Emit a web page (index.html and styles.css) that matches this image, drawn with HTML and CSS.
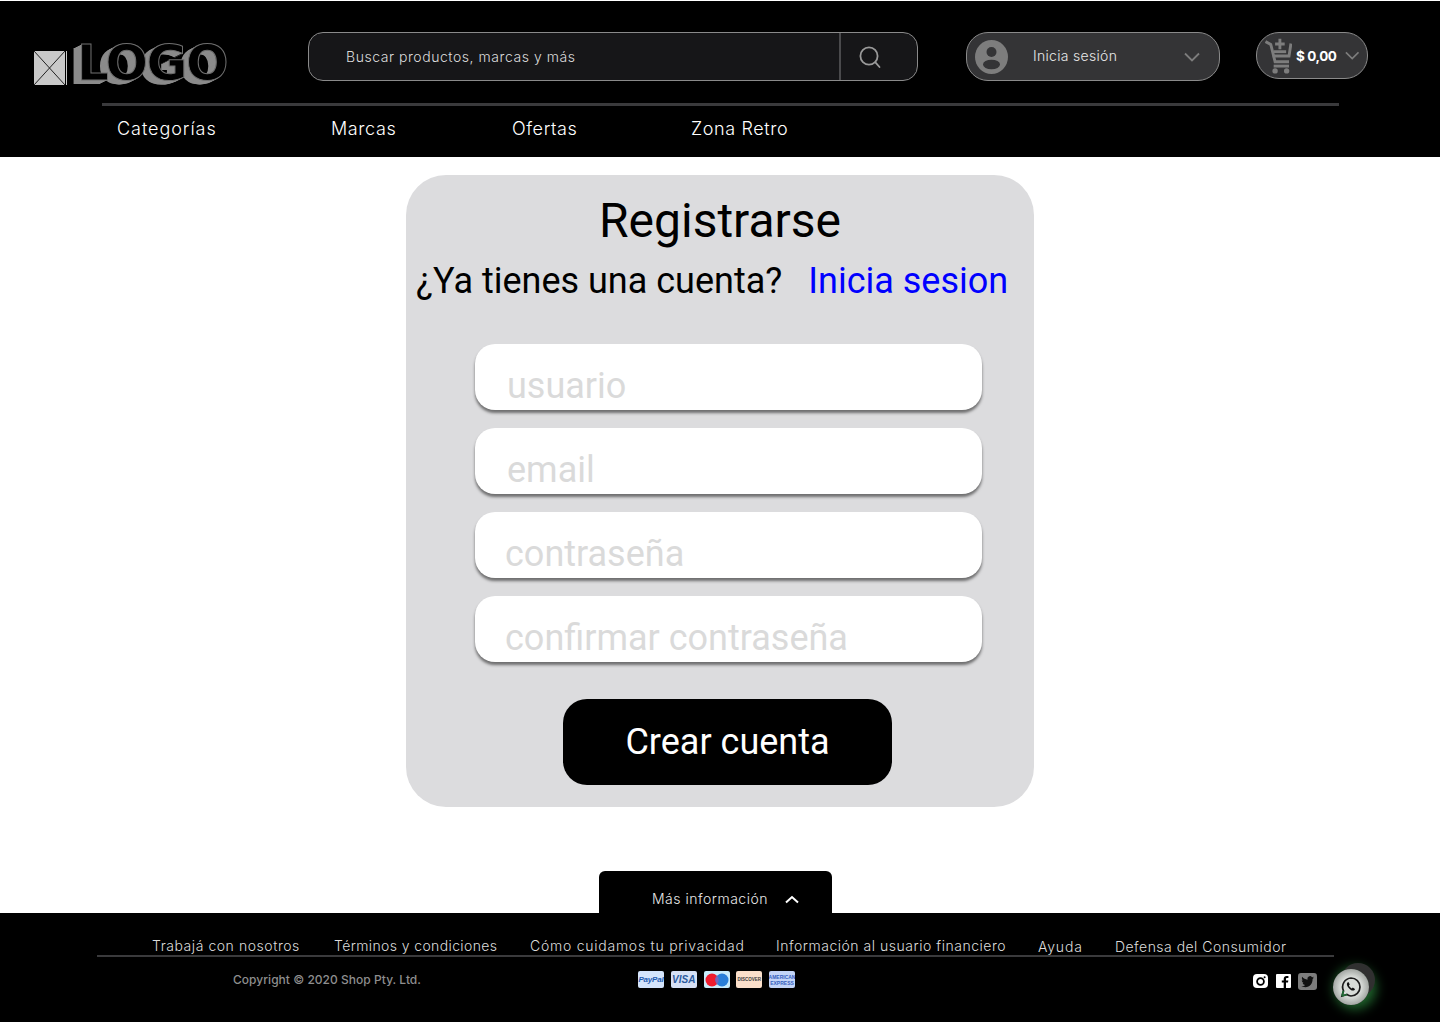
FILE: index.html
```html
<!DOCTYPE html>
<html lang="es">
<head>
  <meta charset="UTF-8" />
  <meta name="viewport" content="width=device-width, initial-scale=1.0"/>
  <title>Registrarse</title>
  <link rel="stylesheet" href="styles.css">
</head>
<body>
  <!-- Header -->
  <header class="header">
    <div class="top-row">
      <div class="logo">
        <svg class="logo-box" width="33" height="34" viewBox="0 0 33 34">
          <rect x="0" y="0" width="33" height="34" fill="#c9c9c9"/>
          <path d="M0 0L31 34M31 0L0 34" stroke="#222" stroke-width="1"/>
          <rect x="31" y="0" width="1" height="34" fill="#000"/>
        </svg>
        <span class="logo-text">LOGO</span>
      </div>

      <div class="search">
        <span class="search-text">Buscar productos, marcas y más</span>
        <span class="search-btn">
          <svg width="24" height="24" viewBox="0 0 24 24" fill="none" stroke="#9a9a9a" stroke-width="1.8" stroke-linecap="round">
            <circle cx="11" cy="11" r="8.6"/>
            <path d="M17.4 17.4L21.5 22"/>
          </svg>
        </span>
      </div>

      <div class="login">
        <svg class="avatar" width="33" height="34" viewBox="0 0 33 34">
          <ellipse cx="16.5" cy="17" rx="16.5" ry="17" fill="#7d7d7d"/>
          <circle cx="16.5" cy="12" r="5" fill="#343436"/>
          <ellipse cx="16.5" cy="24.5" rx="8.5" ry="4.8" fill="#343436"/>
        </svg>
        <span class="login-text">Inicia sesión</span>
        <svg class="chevron" width="16" height="10" viewBox="0 0 16 10" fill="none" stroke="#7d7d7d" stroke-width="1.8">
          <path d="M1 1.5L8 8.5L15 1.5"/>
        </svg>
      </div>

      <div class="cart">
        <svg width="28" height="38" viewBox="0 0 28 38" fill="none" stroke="#7d7d7d" stroke-width="3">
          <path d="M0.5 4L6 7L10.5 25H25"/>
          <path d="M8 19H25L27 6"/>
          <path d="M9 14.5H22"/>
          <path d="M15.5 1V12M10.5 6.5H20.5"/>
          <circle cx="10.5" cy="34.5" r="2.8" fill="#7d7d7d" stroke="none"/>
          <circle cx="22.5" cy="34.5" r="2.8" fill="#7d7d7d" stroke="none"/>
          <path d="M9 29.500H25"/>
        </svg>
        <span class="cart-total">$ 0,00</span>
        <svg width="15" height="9" viewBox="0 0 16 10" fill="none" stroke="#7d7d7d" stroke-width="1.8">
          <path d="M1 1.5L8 8.5L15 1.5"/>
        </svg>
      </div>
    </div>

    <nav class="nav">
      <a href="#">Categorías</a>
      <a href="#">Marcas</a>
      <a href="#">Ofertas</a>
      <a href="#">Zona Retro</a>
    </nav>
  </header>

  <!-- Register card -->
  <main class="main">
    <div class="card">
      <h1>Registrarse</h1>
      <p class="subtitle">¿Ya tienes una cuenta? <a href="#">Inicia sesion</a></p>
      <form class="form">
        <input type="text" placeholder="usuario" />
        <input type="email" placeholder="email" />
        <input class="tight" type="password" placeholder="contraseña" />
        <input class="tight" type="password" placeholder="confirmar contraseña" />
        <button type="button" class="create-btn">Crear cuenta</button>
      </form>
    </div>
  </main>

  <!-- Footer -->
  <div class="more-tab">
    <span>Más información</span>
    <svg width="14" height="9" viewBox="0 0 14 9" fill="none" stroke="#fff" stroke-width="2">
      <path d="M1 7.5L7 2L13 7.5"/>
    </svg>
  </div>
  <footer class="footer">
    <div class="footer-links">
      <a href="#">Trabajá con nosotros</a>
      <a href="#">Términos y condiciones</a>
      <a href="#">Cómo cuidamos tu privacidad</a>
      <a href="#">Información al usuario financiero</a>
      <a href="#" class="low">Ayuda</a>
      <a href="#" class="low">Defensa del Consumidor</a>
    </div>
    <div class="footer-bottom">
      <span class="copyright">Copyright © 2020 Shop Pty. Ltd.</span>
      <div class="pay">
        <span class="pay-card paypal">PayPal</span>
        <span class="pay-card visa">VISA</span>
        <span class="pay-card maestro">
          <svg width="24" height="14" viewBox="0 0 24 14">
            <circle cx="7" cy="7" r="6.5" fill="#ee1c2e"/>
            <circle cx="17" cy="7" r="6.5" fill="#2a7fd8"/>
            <path d="M12 2.600a6.500 6.500 0 0 1 0 8.800a6.500 6.500 0 0 1 0-8.800z" fill="#7a66b8"/>
          </svg>
        </span>
        <span class="pay-card discover">DISCOVER</span>
        <span class="pay-card amex">AMERICAN EXPRESS</span>
      </div>
      <div class="social">
        <svg width="15" height="14" viewBox="0 0 15 14">
          <rect width="15" height="14" rx="4" fill="#fff"/>
          <circle cx="7.5" cy="7.5" r="3.4" fill="none" stroke="#000" stroke-width="1.8"/>
          <circle cx="11.6" cy="3.2" r="1" fill="#000"/>
        </svg>
        <svg width="15" height="14" viewBox="0 0 15 14">
          <rect width="15" height="14" rx="1" fill="#fff"/>
          <path d="M10 14V8.600h2l.3-2.200H10V5.100c0-.7.3-1.100 1.100-1.100h1.300V2.100C12 2 11.300 2 10.600 2 8.900 2 7.700 3 7.700 4.900v1.500H5.800v2.200h1.900V14z" fill="#000"/>
        </svg>
        <svg width="19" height="17" viewBox="0 0 19 16" preserveAspectRatio="none">
          <rect width="19" height="16" rx="3" fill="#7d7d7d"/>
          <path d="M16 4.300c-.5.200-1 .4-1.500.4.500-.3 1-.8 1.200-1.400-.5.300-1.100.5-1.700.6a2.600 2.600 0 0 0-4.500 2.400C7.400 6.200 5.500 5.200 4.200 3.600c-.7 1.200-.3 2.700.8 3.500-.4 0-.8-.1-1.200-.3 0 1.300.9 2.400 2.100 2.600-.4.100-.8.100-1.200 0 .3 1.100 1.300 1.800 2.500 1.800A5.300 5.300 0 0 1 3.300 12.300c1.200.7 2.500 1.100 3.900 1.100 4.800 0 7.500-4 7.400-7.800.5-.3 1-.8 1.400-1.300z" fill="#111"/>
        </svg>
      </div>
    </div>
    <div class="whatsapp">
      <svg width="24" height="24" viewBox="0 0 24 24" fill="none">
        <path d="M3 21L4.500 15.800A9 9 0 0 1 12 3a9 9 0 0 1 0 18 9 9 0 0 1-4-1.500z" stroke="#1d1d1d" stroke-width="1.700"/>
        <path d="M3 21L4.500 15.800M3 21L8 19.500" stroke="#1d6a32" stroke-width="1.700"/>
        <path d="M8.500 7.500c-1 1-.8 2.800.8 5 1.700 2.200 3.700 3.500 5.300 3 .9-.3 1.400-1.100 1.300-1.600l-2.100-1.300-1 .9c-1-.4-2.300-1.700-2.900-3l.8-1-1-2.200c-.5-.2-.9 0-1.200.2z" fill="#111"/>
      </svg>
    </div>
  </footer>
</body>
</html>
```

FILE: styles.css
```css
/* Basic Reset */
* { margin: 0; padding: 0; box-sizing: border-box; }

body {
  font-family: 'Inter', 'Liberation Sans', sans-serif;
  font-weight: 300;
  background: white;
  height: 1024px;
  overflow: hidden;
  display: flex;
  flex-direction: column;
  border-top: 1px solid #fff;
}

a { text-decoration: none; color: inherit; }

/* Header */
.header {
  background: #000;
  height: 156px;
  padding: 31px 72px 0 34px;
  color: white;
}

.top-row {
  display: flex;
  align-items: flex-start;
}

.logo {
  width: 274px;
  height: 50px;
  display: flex;
  align-items: flex-end;
  gap: 8px;
}

.logo-box { margin-bottom: -3px; flex-shrink: 0; }

.logo-text {
  font-family: 'DejaVu Sans', sans-serif;
  font-weight: 700;
  font-size: 50px;
  line-height: 50px;
  margin: 0 0 -6px 2px;
  letter-spacing: -1.5px;
  color: #000;
  -webkit-text-stroke: 1px #6e6e6e;
  text-shadow: -1px 1px 0 #8b8b8b, -2px 1px 0 #8b8b8b, -3px 2px 0 #8b8b8b, -4px 2px 0 #8b8b8b, -5px 3px 0 #8b8b8b, -6px 3px 0 #8b8b8b, -7px 4px 0 #8b8b8b, -8px 4px 0 #8b8b8b;
}

.search {
  width: 610px;
  height: 49px;
  background: #161618;
  border: 1px solid #8a8a8a;
  border-radius: 15px;
  display: flex;
  align-items: center;
  justify-content: space-between;
  padding-left: 37px;
  margin-right: 48px;
}

.search-text { font-size: 14px; letter-spacing: 0.55px; color: #dcdcdc; }

.search-btn {
  width: 78px;
  height: 100%;
  border-left: 2px solid #4a4a4c;
  display: flex;
  align-items: center;
  padding-left: 17px;
}

.login {
  width: 254px;
  height: 49px;
  background: #343436;
  border: 1px solid #8a8a8a;
  border-radius: 22px;
  display: flex;
  align-items: center;
  padding: 0 19px 0 8px;
  margin-right: 36px;
}

.login-text { font-size: 14px; letter-spacing: 0.3px; color: #e8e8e8; margin: -3px 0 0 25px; flex: 1; }

.cart {
  width: 112px;
  height: 47px;
  background: #343436;
  border: 1px solid #8a8a8a;
  border-radius: 23px;
  display: flex;
  align-items: center;
  padding: 0 8px;
  gap: 4px;
}

.cart-total {
  font-size: 13.5px;
  font-weight: 700;
  letter-spacing: -0.4px;
  white-space: nowrap;
  margin: 0 4px 0 0;
}

.nav {
  margin: 21px 29px 0 68px;
  border-top: 3px solid #3a3a3c;
  padding: 12px 0 0 15px;
  display: flex;
  font-size: 18px;
  letter-spacing: 0.6px;
  line-height: 22px;
}

.nav a:nth-child(1) { width: 214px; letter-spacing: 0.95px; }
.nav a:nth-child(2) { width: 181px; }
.nav a:nth-child(3) { width: 179px; }

/* Card */
.main {
  flex: 1;
  padding: 18px 406px 0;
}

.card {
  background: #dcdcde;
  height: 632px;
  border-radius: 40px;
  padding-top: 18px;
  font-family: 'Roboto', sans-serif;
  font-weight: 400;
  color: #000;
}

.card h1 {
  font-size: 48px;
  font-weight: 400;
  line-height: 56px;
  text-align: center;
}

.subtitle {
  font-size: 36px;
  line-height: 42px;
  margin-top: 11px;
  padding-left: 10px;
  white-space: nowrap;
}

.subtitle a { color: #0000ff; margin-left: 17px; }

.form {
  margin: 42px 0 0 69px;
  width: 507px;
  display: flex;
  flex-direction: column;
  gap: 18px;
}

.form input {
  width: 100%;
  height: 66px;
  border: none;
  border-radius: 20px;
  background: white;
  box-shadow: 0 3px 3px rgba(0,0,0,0.5);
  font-family: 'Roboto', sans-serif;
  font-size: 36px;
  padding: 17px 0 0 32px;
}

.form input.tight { padding-left: 30px; }

.form input::placeholder { color: #dadada; opacity: 1; }

.create-btn {
  width: 329px;
  height: 86px;
  margin: 19px 0 0 88px;
  background: #000;
  color: white;
  border: none;
  border-radius: 24px;
  font-family: 'Roboto', sans-serif;
  font-size: 36px;
}

/* Footer */
.more-tab {
  width: 233px;
  height: 42px;
  margin-left: 599px;
  background: #000;
  border-radius: 6px 6px 0 0;
  color: #e8e8e8;
  display: flex;
  align-items: center;
  font-size: 14px;
  letter-spacing: 0.5px;
  padding: 12px 0 0 53px;
  gap: 17px;
}

.more-tab svg { margin-top: 2px; }

.footer {
  background: #000;
  height: 109px;
  margin-bottom: 2px;
  position: relative;
  color: #dcdcdc;
}

.footer-links {
  margin: 0 106px 0 97px;
  height: 44px;
  border-bottom: 2px solid #3a3a3c;
  padding: 24px 0 0 55px;
  display: flex;
  font-size: 14px;
  letter-spacing: 0.47px;
  line-height: 18px;
  white-space: nowrap;
}

.footer-links a:nth-child(1) { width: 182px; letter-spacing: 0.55px; }
.footer-links a:nth-child(2) { width: 196px; letter-spacing: 0.38px; }
.footer-links a:nth-child(3) { width: 246px; letter-spacing: 0.75px; }
.footer-links a:nth-child(4) { width: 262px; letter-spacing: 0.52px; }
.footer-links a:nth-child(5) { width: 77px; letter-spacing: 0.8px; }
.footer-links a.low { padding-top: 1px; }

.footer-bottom {
  display: flex;
  align-items: center;
  padding: 13px 0 0 233px;
  height: 32px;
}

.copyright { font-size: 12px; font-weight: 500; letter-spacing: 0.03px; color: #8e8e8e; width: 405px; }

.pay { display: flex; gap: 6.75px; width: 615px; }

.pay-card {
  width: 26px;
  height: 17px;
  border-radius: 2px;
  display: flex;
  align-items: center;
  justify-content: center;
  font-family: 'Liberation Sans', sans-serif;
  font-weight: 700;
  white-space: nowrap;
  overflow: hidden;
}

.paypal { background: #d4e4fb; color: #1f5bb0; font-size: 8px; letter-spacing: -0.2px; font-style: italic; }
.visa { background: #d6e0f5; color: #2c5a9e; font-size: 10px; font-style: italic; }
.maestro { background: #c9ecfb; }
.discover { background: #fbdfca; color: #3a3a3a; font-size: 4.5px; }
.amex { background: #c3d4f7; color: #3460c0; font-size: 5px; line-height: 6px; white-space: normal; text-align: center; }

.social { display: flex; align-items: center; gap: 7.5px; margin-top: 3px; }

.whatsapp {
  position: absolute;
  left: 1333px;
  top: 56px;
  width: 36px;
  height: 36px;
  border-radius: 50%;
  background: radial-gradient(circle, #d8dcd8 40%, #8a8e8a 85%, #c4c8c4 100%);
  box-shadow: 7px -7px 0 -1px #303030, 4px 1px 12px 3px rgba(50,160,70,0.65);
  display: flex;
  align-items: center;
  justify-content: center;
}
```
